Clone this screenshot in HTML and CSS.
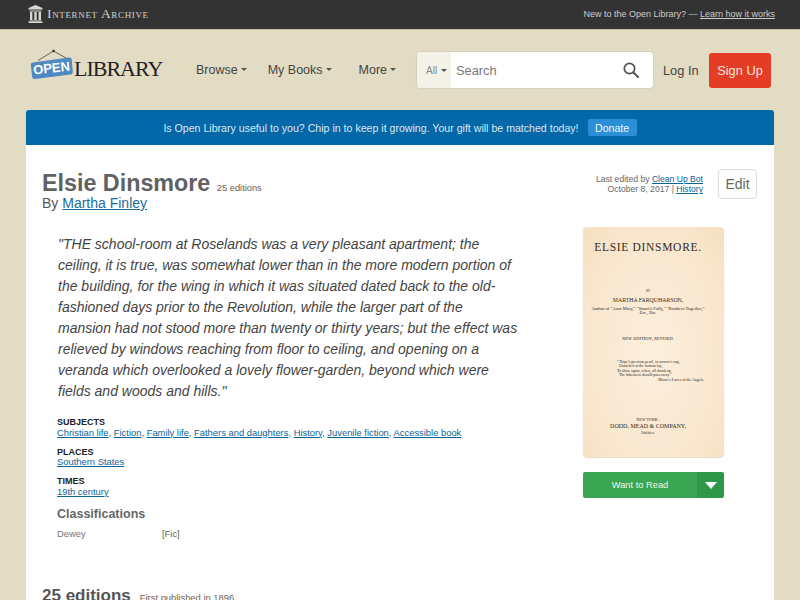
FILE: index.html
```html
<!DOCTYPE html>
<html lang="en">
<head>
<meta charset="utf-8">
<title>Elsie Dinsmore</title>
<link rel="stylesheet" href="styles.css">
</head>
<body>
<div class="topbar">
  <a class="ia">
    <svg class="ia-icon" width="15" height="18" viewBox="0 0 15 18"><path fill="#d8d8d2" d="M7.500 0 14.500 3V4.500H.5V3zM1.500 5.500h12V6.500h-12zM2 7h2.400v8H2zM6.300 7h2.400v8H6.300zM10.600 7h2.400v8h-2.400zM1.500 15.500h12v.8h-12zM.5 16.500h14V18H.5z"/></svg>
    <span class="ia-name">Internet Archive</span>
  </a>
  <div class="top-msg">New to the Open Library? — <a>Learn how it works</a></div>
</div>
<header class="header">
  <a class="logo">
    <svg class="logo-sign" width="46" height="36" viewBox="0 0 46 36">
      <path d="M8 11.500 23.500 2 36 9" fill="none" stroke="#6b6252" stroke-width="1"/>
      <circle cx="23.500" cy="2" r="1.300" fill="#333"/>
      <path fill="#4f8ac4" d="M3 13.500 39 8.500q2.500-.3 2.800 2.200l1 12.300q.2 2.300-2 2.600L5 29.900q-2.500.3-2.800-2.200L.8 16q-.2-2.200 2.200-2.500z"/>
      <text x="21.500" y="23.500" class="logo-open" text-anchor="middle" transform="rotate(-6 21.500 19)">OPEN</text>
    </svg>
    <span class="logo-text">LIBRARY</span>
  </a>
  <nav class="nav">
    <a class="nav-item">Browse<i class="caret"></i></a>
    <a class="nav-item">My Books<i class="caret"></i></a>
    <a class="nav-item nav-item-more">More<i class="caret"></i></a>
  </nav>
  <form class="search">
    <div class="search-all">All<i class="caret caret-small"></i></div>
    <div class="search-input">
      <span>Search</span>
      <svg width="16" height="16" viewBox="0 0 16 16"><circle cx="6.500" cy="6.500" r="5.200" fill="none" stroke="#555" stroke-width="1.700"/><path d="M10.500 10.500 15 15" stroke="#555" stroke-width="2" stroke-linecap="round"/></svg>
    </div>
  </form>
  <a class="login">Log In</a>
  <a class="signup">Sign Up</a>
</header>
<main class="card">
  <div class="banner">
    <span>Is Open Library useful to you? Chip in to keep it growing. Your gift will be matched today!</span>
    <a class="donate">Donate</a>
  </div>
  <div class="content">
    <div class="title-row">
      <div class="title-block">
        <h1 class="title">Elsie Dinsmore <small class="edition-count">25 editions</small></h1>
        <div class="byline">By <a class="link">Martha Finley</a></div>
      </div>
      <div class="edit-info">
        <div class="edited">Last edited by <a class="link">Clean Up Bot</a><br>October 8, 2017 | <a class="link">History</a></div>
        <a class="edit-btn">Edit</a>
      </div>
    </div>
    <div class="columns">
      <div class="main-col">
        <p class="quote">"THE school-room at Roselands was a very pleasant apartment; the ceiling, it is true, was somewhat lower than in the more modern portion of the building, for the wing in which it was situated dated back to the old-fashioned days prior to the Revolution, while the larger part of the mansion had not stood more than twenty or thirty years; but the effect was relieved by windows reaching from floor to ceiling, and opening on a veranda which overlooked a lovely flower-garden, beyond which were fields and woods and hills."</p>
        <div class="facets">
          <div class="facet"><h6>Subjects</h6><a class="link">Christian life</a>, <a class="link">Fiction</a>, <a class="link">Family life</a>, <a class="link">Fathers and daughters</a>, <a class="link">History</a>, <a class="link">Juvenile fiction</a>, <a class="link">Accessible book</a></div>
          <div class="facet"><h6>Places</h6><a class="link">Southern States</a></div>
          <div class="facet"><h6>Times</h6><a class="link">19th century</a></div>
          <h4 class="class-title">Classifications</h4>
          <div class="class-row"><span class="class-key">Dewey</span><span class="class-val">[Fic]</span></div>
        </div>
      </div>
      <aside class="side-col">
        <div class="cover">
          <div class="cv-title">ELSIE DINSMORE.</div>
          <div class="cv-by">BY</div>
          <div class="cv-author">MARTHA FARQUHARSON,</div>
          <div class="cv-tiny">Author of "Aunt Mary," "Stuart's Folly," "Brothers Together,"<br>Etc., Etc.</div>
          <div class="cv-ed">NEW EDITION, REVISED.</div>
          <div class="cv-verse">
            <div>" Hope's precious pearl, in sorrow's cup,</div>
            <div>&nbsp;&nbsp;Unmelted at the bottom lay,</div>
            <div>To shine again, when, all drunk up,</div>
            <div>&nbsp;&nbsp;The bitterness should pass away."</div>
            <div class="cv-verse-by">Moore's Loves of the Angels.</div>
          </div>
          <div class="cv-city">NEW YORK :</div>
          <div class="cv-pub">DODD, MEAD &amp; COMPANY,</div>
          <div class="cv-pub2">Publishers.</div>
        </div>
        <div class="want">
          <a class="want-main">Want to Read</a>
          <a class="want-drop"><svg width="12" height="7" viewBox="0 0 12 7"><path d="M0 0h12L6 7z" fill="#fff"/></svg></a>
        </div>
      </aside>
    </div>
    <div class="editions-head"><h2>25 editions</h2><span>First published in 1896</span></div>
  </div>
</main>
</body>
</html>
```
FILE: styles.css
```css
* { box-sizing: border-box; }
html { height: 600px; overflow: hidden; }
body { margin: 0; background: #e2dcc5; font-family: "Liberation Sans", Arial, sans-serif; color: #333; }
a { color: inherit; }

.topbar { height: 30px; background: #333; border-bottom: 1px solid #c9bfa3; display: flex; align-items: center; justify-content: space-between; padding: 0 25px 1px 28px; }
.ia { display: flex; align-items: center; gap: 4px; color: #d4d4cc; }
.ia-icon { display: block; }
.ia-name { font-family: "Liberation Serif", serif; font-variant: small-caps; font-size: 13.500px; letter-spacing: .65px; }
.top-msg { font-size: 9px; color: #ccc; }
.top-msg a { text-decoration: underline; }

.header { height: 80px; display: flex; align-items: center; padding: 0 29px 0 30px; }
.logo { display: flex; align-items: flex-start; width: 166px; height: 36px; margin-top: -6px; }
.logo-sign { display: block; margin-right: -2px; flex: none; }
.logo-open { font: bold 13px "Liberation Sans", sans-serif; fill: #fff; }
.logo-text { font: 22px/24px "Liberation Serif", serif; color: #222; margin-top: 8px; letter-spacing: -1px; }
.nav { display: flex; width: 221px; font-size: 12.500px; color: #444; margin-top: -1px; }
.nav-item { display: flex; align-items: center; margin-right: 21px; white-space: nowrap; }
.nav-item-more { margin-left: 6px; }
.caret { display: inline-block; margin-left: 3px; border-top: 3px solid #555; border-left: 3px solid transparent; border-right: 3px solid transparent; }
.caret-small { margin-left: 4px; }

.search { display: flex; width: 236px; height: 36px; background: #fff; border-radius: 4px; box-shadow: 0 0 1px 1px #d6d0bb; overflow: hidden; }
.search-all { width: 34px; background: #f4f1e8; display: flex; align-items: center; padding-left: 9px; font-size: 10px; color: #888; }
.search-input { flex: 1; display: flex; align-items: center; justify-content: space-between; padding: 0 14px 0 5px; font-size: 12.800px; color: #777; }
.login { margin-left: 10px; font-size: 12.800px; color: #444; width: 46px; flex: none; }
.signup { width: 62px; flex: none; height: 35px; background: #e43d26; border-radius: 3px; color: #f6e6df; font-size: 12.800px; display: flex; align-items: center; justify-content: center; }

.card { margin: 0 26px; background: #fff; border-radius: 3px 3px 0 0; }
.banner { height: 35px; background: #0467a8; border-radius: 3px 3px 0 0; color: #dbe9f2; font-size: 10.600px; display: flex; align-items: center; justify-content: center; gap: 9px; padding-right: 0; }
.donate { width: 49px; height: 17px; background: #2b8fd8; border-radius: 2px; color: #f2f7fb; display: flex; align-items: center; justify-content: center; font-size: 10.600px; }

.content { padding: 24px 17px 0 16px; }
.title-row { display: flex; justify-content: space-between; align-items: flex-start; }
.title-block { padding-top: 3px; }
.title { margin: 0; font-size: 23.300px; line-height: 22px; font-weight: bold; color: #616161; }
.edition-count { font-size: 9.300px; line-height: 1; font-weight: normal; color: #6b6252; }
.byline { font-size: 14px; line-height: 18px; color: #555; }
.link { color: #0c6397; text-decoration: underline; }
.byline .link { color: #1a6c9e; }
.edit-info { display: flex; gap: 15px; align-items: flex-start; }
.edited { font-size: 8.600px; line-height: 10px; color: #666; text-align: right; padding-top: 5px; }
.edit-btn { width: 39px; height: 30px; border: 1px solid #ddd; border-radius: 4px; color: #666; font-size: 14px; display: flex; align-items: center; justify-content: center; }

.columns { display: flex; justify-content: space-between; padding-top: 15px; }
.main-col { width: 482px; padding-top: 7px; }
.quote { margin: 0; padding: 0 5px 0 16px; font-size: 14px; line-height: 21px; font-style: italic; color: #444; }
.facets { padding-left: 15px; padding-top: 16px; }
.facet { font-size: 9.400px; line-height: 10px; color: #555; margin-bottom: 10px; }
.facet h6 { margin: 0; font-size: 9px; line-height: 9.500px; font-weight: bold; text-transform: uppercase; color: #222; }
.class-title { margin: -1px 0 0; font-size: 12.500px; line-height: 16px; color: #666; }
.class-row { display: flex; font-size: 9.400px; padding-top: 6px; line-height: 12px; }
.class-key { width: 105px; color: #777; }
.class-val { color: #666; }

.side-col { width: 141px; margin-right: 33px; }
.cover { height: 230px; background: radial-gradient(ellipse at 50% 55%, #fcefdd 0%, #f9e6cc 70%, #f6dfc0 100%); border-radius: 4px; box-shadow: 0 1px 1px #e6dcc8; text-align: center; color: #2f2a24; font-family: "Liberation Serif", serif; padding: 12px 11px 0 0; white-space: nowrap; overflow: hidden; }
.cv-title { font-size: 11.500px; line-height: 16px; letter-spacing: .7px; }
.cv-by { font-size: 3px; line-height: 4px; margin-top: 34px; }
.cv-author { font-size: 5.800px; line-height: 8px; margin-top: 3px; }
.cv-tiny { font-size: 4.600px; line-height: 4px; margin-top: 3px; }
.cv-ed { font-size: 4.700px; line-height: 5px; margin-top: 21px; font-style: italic; }
.cv-verse { font-size: 3.900px; line-height: 4.400px; margin-top: 19px; text-align: left; padding-left: 34px; }
.cv-verse-by { text-align: right; padding-right: 9px; }
.cv-city { font-size: 4px; line-height: 5px; margin-top: 35px; }
.cv-pub { font-size: 6px; line-height: 8px; margin-top: 0; }
.cv-pub2 { font-size: 3px; line-height: 5px; margin-top: 1px; }

.want { display: flex; height: 26px; margin-top: 15px; border-radius: 2px; overflow: hidden; color: #eef7ef; font-size: 9.300px; }
.want-main { flex: 1; background: #3aa552; display: flex; align-items: center; justify-content: center; }
.want-drop { width: 27px; background: #2f9748; display: flex; align-items: center; justify-content: center; }

.editions-head { display: flex; align-items: baseline; gap: 9px; padding-top: 46px; }
.editions-head h2 { margin: 0; font-size: 17px; line-height: 20px; color: #555; }
.editions-head span { font-size: 9.400px; color: #6b6252; }
```
